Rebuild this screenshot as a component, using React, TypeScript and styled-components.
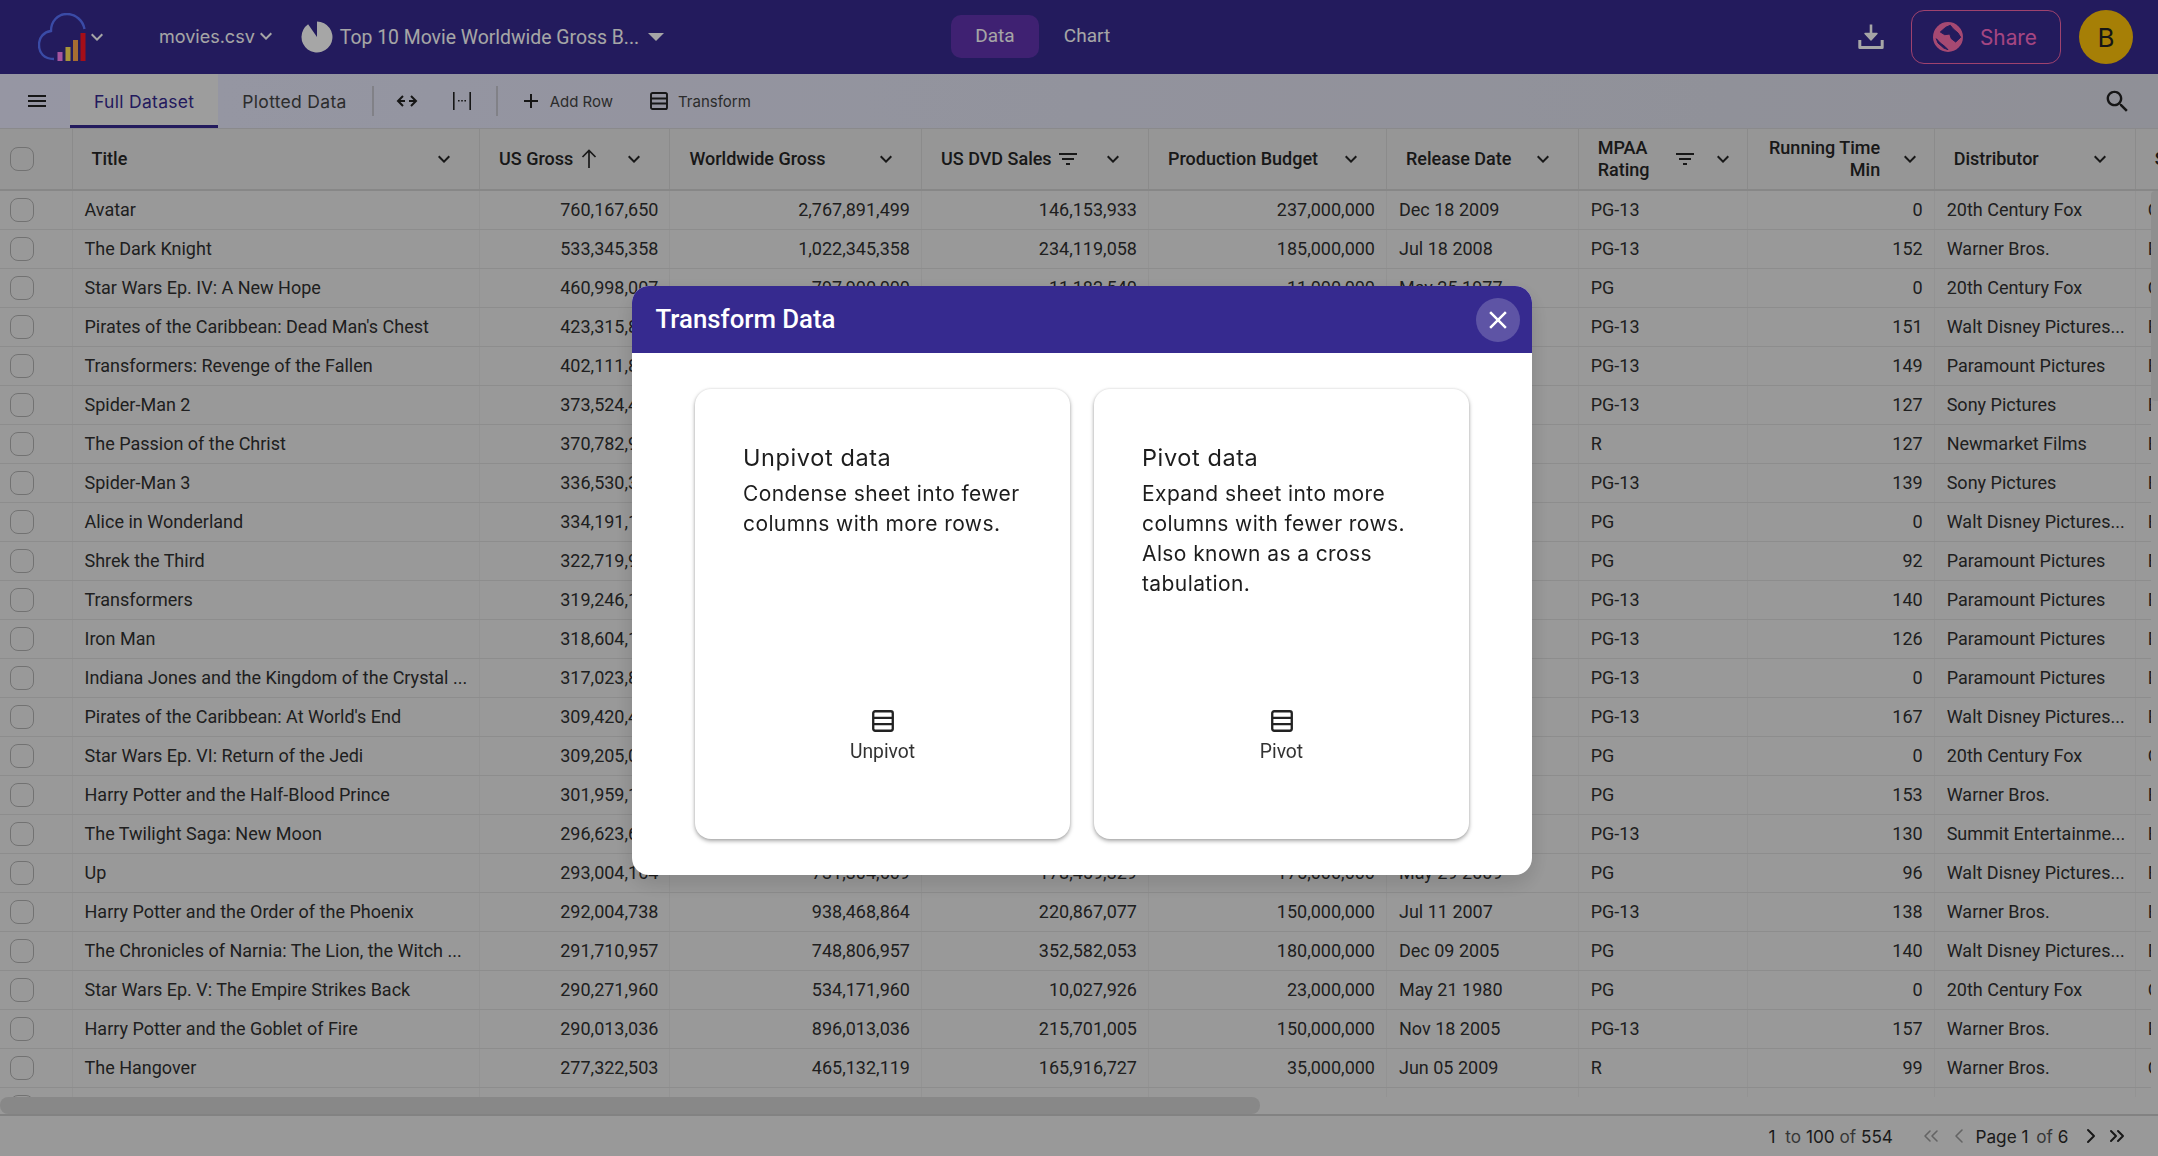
import React from 'react';
import styled, { createGlobalStyle } from 'styled-components';
import { ChevronLeft, ChevronRight, ChevronsLeft, ChevronsRight } from 'lucide-react';

const COLUMNS = '72.5px 407.5px 190.4px 251.6px 227px 238px 191.7px 169.5px 186.5px 201px 260px';
const PRIMARY = '#362a8f';

const GlobalStyle = createGlobalStyle`
    html,
    body {
        margin: 0;
        height: 100%;
        overflow: hidden;
        background: #ececec;
        font-family: Roboto, 'Liberation Sans', sans-serif;
    }
`;

const Page = styled.div`
    display: flex;
    flex-direction: column;
    height: 100vh;
`;

/* top bar */
const TopBar = styled.header`
    display: flex;
    align-items: center;
    flex: 0 0 74px;
    padding: 0 25px 0 38px;
    box-sizing: border-box;
    background: ${PRIMARY};
    color: #fff;
`;
const LeftGroup = styled.div`
    display: flex;
    align-items: center;
    width: 913px;
`;
const LogoChevron = styled.svg`
    width: 24px;
    height: 24px;
    margin-left: -1px;
    fill: #fff;
`;
const FileName = styled.div`
    display: flex;
    align-items: center;
    margin: -2px 0 0 50px;
    font: 400 18px Inter, sans-serif;
`;
const ChartPie = styled.svg`
    width: 32px;
    height: 32px;
    margin-left: 23px;
    fill: #fff;
`;
const ChartName = styled.div`
    margin-left: 7px;
    font: 400 19.4px Roboto, sans-serif;
`;
const Caret = styled.div`
    width: 0;
    height: 0;
    margin-left: 9px;
    border-left: 8px solid transparent;
    border-right: 8px solid transparent;
    border-top: 8px solid #fff;
`;
const ViewTab = styled.div<{ $active?: boolean }>`
    display: flex;
    align-items: center;
    justify-content: center;
    box-sizing: border-box;
    width: 88px;
    height: 43px;
    margin: -1px 0 0 ${({ $active }) => ($active ? 0 : 4)}px;
    padding-bottom: 2px;
    border-radius: 10px;
    background: ${({ $active }) => ($active ? '#6134af' : 'transparent')};
    font: 400 19px Roboto, sans-serif;
`;
const RightGroup = styled.div`
    display: flex;
    align-items: center;
    margin-left: auto;
`;
const ShareButton = styled.div`
    display: flex;
    align-items: center;
    gap: 17px;
    box-sizing: border-box;
    width: 150px;
    height: 54px;
    margin-left: 26px;
    padding-left: 21px;
    border: 1.5px solid #f566a9;
    border-radius: 13px;
    color: #fe6cc8;
    font: 400 20.8px Inter, sans-serif;
`;
const Avatar = styled.div`
    display: flex;
    align-items: center;
    justify-content: center;
    width: 54px;
    height: 54px;
    margin-left: 18px;
    border-radius: 50%;
    background: #ffc30a;
    color: #222;
    font: 400 26px Inter, sans-serif;
`;

/* toolbar */
const ToolBar = styled.div`
    display: flex;
    align-items: center;
    flex: 0 0 55px;
    box-sizing: border-box;
    border-bottom: 1px solid #d4d4d8;
    background: linear-gradient(90deg, #e6e7fb, #dcdde8);
    color: #333;
`;
const MenuButton = styled.div`
    display: flex;
    justify-content: center;
    box-sizing: border-box;
    width: 70px;
    padding-left: 4px;
`;
const Tab = styled.div<{ $active?: boolean }>`
    display: flex;
    align-items: center;
    box-sizing: border-box;
    height: 54px;
    padding: 3px 24px 0;
    border-bottom: 3px solid ${({ $active }) => ($active ? PRIMARY : 'transparent')};
    background: ${({ $active }) => ($active ? '#f2f2f2' : 'transparent')};
    color: ${({ $active }) => ($active ? PRIMARY : '#444')};
    font: 400 17.5px Inter, sans-serif;
    letter-spacing: 0.3px;
`;
const Divider = styled.div`
    width: 2px;
    height: 30px;
    margin-left: 1px;
    background: #c6c6cf;
`;
const ToolIcons = styled.div`
    display: flex;
    padding: 0 5px 0 6px;
`;
const ToolIcon = styled.div`
    display: flex;
    align-items: center;
    justify-content: center;
    width: 55px;
`;
const ToolAction = styled.div<{ $gap: number; $left: number }>`
    display: flex;
    align-items: center;
    gap: ${({ $gap }) => $gap}px;
    margin-left: ${({ $left }) => $left}px;
    font: 400 15px Inter, sans-serif;
    color: #444;
`;
const SearchButton = styled.div`
    display: flex;
    margin-left: auto;
    margin-right: 26px;
`;

/* grid */
const HeaderRow = styled.div`
    display: grid;
    grid-template-columns: ${COLUMNS};
    flex: 0 0 62px;
    box-sizing: border-box;
    overflow: hidden;
    border-bottom: 2px solid #cfcfcf;
    background: #e6e6e6;
`;
const HeaderCell = styled.div<{ $tight?: boolean }>`
    display: flex;
    align-items: center;
    box-sizing: border-box;
    min-width: 0;
    padding: 0 ${({ $tight }) => ($tight ? 12 : 23)}px 0 19px;
    border-right: 1px solid #d6d6d6;
    color: #262626;
    font: 500 18px/22px Roboto, sans-serif;
    white-space: nowrap;
`;
const HeaderCheck = styled(HeaderCell)`
    padding: 0 0 0 10px;
`;
const WrappedLabel = styled.div<{ $width: number; $right?: boolean }>`
    width: ${({ $width }) => $width}px;
    margin-left: ${({ $right }) => ($right ? 1 : 0)}px;
    text-align: ${({ $right }) => ($right ? 'right' : 'left')};
    white-space: normal;
`;
const HeaderIcon = styled.svg<{ $left: number }>`
    flex: none;
    width: 24px;
    height: 24px;
    margin-left: ${({ $left }) => $left}px;
    fill: #262626;
`;
const ColumnChevron = styled.svg`
    flex: none;
    width: 24px;
    height: 24px;
    margin-left: auto;
    fill: #262626;
`;
const Body = styled.div`
    display: flex;
    flex: 1;
    min-height: 0;
`;
const Viewport = styled.div`
    flex: 1;
    overflow: hidden;
`;
const Row = styled.div`
    display: grid;
    grid-template-columns: ${COLUMNS};
    box-sizing: border-box;
    height: 39px;
    border-bottom: 1px solid #d9d9d9;
`;
const Cell = styled.div<{ $right?: boolean }>`
    box-sizing: border-box;
    overflow: hidden;
    padding: 0 11px 0 12px;
    border-right: 1px solid #e2e2e2;
    color: #303030;
    font: 400 18px/38px Roboto, sans-serif;
    text-align: ${({ $right }) => ($right ? 'right' : 'left')};
    white-space: nowrap;
`;
const CheckCell = styled.div`
    padding: 7px 0 0 10px;
    border-right: 1px solid #e2e2e2;
`;
const Checkbox = styled.div`
    box-sizing: border-box;
    width: 24px;
    height: 24px;
    border: 1px solid #b0b0b0;
    border-radius: 8px;
`;
const VerticalTrack = styled.div`
    flex: 0 0 7px;
`;
const VerticalThumb = styled.div`
    height: 210px;
    border-radius: 4px 0 0 4px;
    background: #dcdcdc;
`;
const HorizontalTrack = styled.div`
    flex: 0 0 17px;
`;
const HorizontalThumb = styled.div`
    width: 1260px;
    height: 100%;
    border-radius: 8px;
    background: #d2d2d2;
`;

/* footer */
const Footer = styled.footer`
    display: flex;
    align-items: center;
    justify-content: flex-end;
    flex: 0 0 42px;
    box-sizing: border-box;
    padding: 0 28.5px 0 0;
    border-top: 2px solid #c8c8c8;
    color: #555;
    font: 400 17.2px Inter, sans-serif;
`;
const Strong = styled.span<{ $gap?: number }>`
    margin-right: ${({ $gap }) => $gap ?? 0}px;
    color: #2a2a2a;
`;
const Summary = styled.div`
    margin-right: 24.5px;
`;
const PageLabel = styled.div`
    margin: 0 9px 0 2px;
`;
const PagerIcon = styled.span<{ $disabled?: boolean }>`
    display: flex;
    margin: 0 ${({ $disabled }) => ($disabled ? 2 : 1)}px;
    color: ${({ $disabled }) => ($disabled ? '#9a9a9a' : '#262626')};
`;

/* modal */
const Scrim = styled.div`
    position: fixed;
    inset: 0;
    display: flex;
    align-items: center;
    justify-content: center;
    padding: 5px 0 0 6px;
    background: rgba(0, 0, 0, 0.35);
`;
const Modal = styled.div`
    width: 900px;
    height: 589px;
    overflow: hidden;
    border-radius: 17px;
    background: #fff;
    box-shadow: 0 8px 24px rgba(0, 0, 0, 0.15);
`;
const ModalHeader = styled.div`
    display: flex;
    align-items: center;
    justify-content: space-between;
    box-sizing: border-box;
    height: 67px;
    padding: 0 12px 0 23.5px;
    background: ${PRIMARY};
    color: #fff;
    font: 500 25.8px Roboto, sans-serif;
`;
const ModalTitle = styled.div`
    margin-top: -2px;
`;
const CloseButton = styled.div`
    display: flex;
    align-items: center;
    justify-content: center;
    width: 44px;
    height: 44px;
    border-radius: 50%;
    background: rgba(255, 255, 255, 0.2);
`;
const ModalBody = styled.div`
    display: flex;
    gap: 24px;
    padding: 36px 63px;
`;
const Card = styled.div`
    display: flex;
    flex-direction: column;
    box-sizing: border-box;
    width: 375px;
    height: 450px;
    padding: 54px 48px 0;
    border-radius: 16px;
    background: #fff;
    box-shadow: 0 2px 4px rgba(0, 0, 0, 0.35), 0 0 3px rgba(0, 0, 0, 0.1);
    color: #1d1d1d;
`;
const CardTitle = styled.div`
    margin-bottom: 6px;
    font: 400 23.5px/30px Inter, sans-serif;
    letter-spacing: 0.6px;
`;
const CardText = styled.div`
    font: 400 21px/30px Inter, sans-serif;
    letter-spacing: 0.4px;
`;
const CardAction = styled.div`
    display: flex;
    flex-direction: column;
    align-items: center;
    gap: 9px;
    margin-top: auto;
    padding-bottom: 76px;
    font: 400 19.3px/22px Roboto, sans-serif;
    color: #333;
`;

const Chevron = () => (
    <path d="M7.41 8.59 12 13.17l4.59-4.58L18 10l-6 6-6-6 1.41-1.41z" />
);
const FilterPath = () => <path d="M10 18h4v-2h-4v2zM3 6v2h18V6H3zm3 7h12v-2H6v2z" />;
const SortPath = () => (
    <path d="M12 21V3.5M5.5 10 12 3.5 18.5 10" fill="none" stroke="#262626" strokeWidth="1.7" />
);

const TableIcon = ({ size }: { size: number }) => (
    <svg width={size} height={size} viewBox="0 0 18 18" fill="none" stroke="#222" strokeWidth="1.9">
        <rect x="1" y="1" width="16" height="16" rx="1.6" />
        <path d="M1 6.5h16M1 11.5h16" />
    </svg>
);

const GlobeIcon = () => (
    <svg width="30" height="30" viewBox="0 0 30 30">
        <circle cx="15" cy="15" r="15" fill="#ff70b0" />
        <path
            d="M7.3 10 12.7 5.3 17.3 3.3 20 6.7 25 11 27.7 15.3 22.7 20 18.3 16.7 16.7 12 11.7 12.7Z"
            fill={PRIMARY}
            stroke={PRIMARY}
            strokeLinejoin="round"
        />
        <path
            d="M3.3 16.7 7.3 21 11.7 24.3 15 27.7 10.7 26 5 21Z"
            fill={PRIMARY}
            stroke={PRIMARY}
            strokeLinejoin="round"
        />
    </svg>
);

type RowData = [string, string, string, string, string, string, string, string, string, string];

const ROWS: RowData[] = [
    ['Avatar', '760,167,650', '2,767,891,499', '146,153,933', '237,000,000', 'Dec 18 2009', 'PG-13', '0', '20th Century Fox', 'Original Screenplay'],
    ['The Dark Knight', '533,345,358', '1,022,345,358', '234,119,058', '185,000,000', 'Jul 18 2008', 'PG-13', '152', 'Warner Bros.', 'Based on Comic'],
    ['Star Wars Ep. IV: A New Hope', '460,998,007', '797,900,000', '11,182,540', '11,000,000', 'May 25 1977', 'PG', '0', '20th Century Fox', 'Original Screenplay'],
    ["Pirates of the Caribbean: Dead Man's Chest", '423,315,812', '1,065,659,812', '320,830,925', '225,000,000', 'Jul 07 2006', 'PG-13', '151', 'Walt Disney Pictures...', 'Based on Game'],
    ['Transformers: Revenge of the Fallen', '402,111,870', '836,519,699', '288,000,000', '210,000,000', 'Jun 24 2009', 'PG-13', '149', 'Paramount Pictures', 'Based on Toy'],
    ['Spider-Man 2', '373,524,485', '783,705,001', '4,196,484', '200,000,000', 'Jun 30 2004', 'PG-13', '127', 'Sony Pictures', 'Based on Comic'],
    ['The Passion of the Christ', '370,782,930', '611,899,420', '618,454', '25,000,000', 'Feb 25 2004', 'R', '127', 'Newmarket Films', 'Based on Book'],
    ['Spider-Man 3', '336,530,303', '890,875,303', '124,058,348', '258,000,000', 'May 04 2007', 'PG-13', '139', 'Sony Pictures', 'Based on Comic'],
    ['Alice in Wonderland', '334,191,110', '1,023,291,110', '152,000,000', '200,000,000', 'Mar 05 2010', 'PG', '0', 'Walt Disney Pictures...', 'Based on Book'],
    ['Shrek the Third', '322,719,944', '798,958,162', '176,400,340', '160,000,000', 'May 18 2007', 'PG', '92', 'Paramount Pictures', 'Based on Book'],
    ['Transformers', '319,246,193', '708,272,592', '290,787,166', '151,000,000', 'Jul 03 2007', 'PG-13', '140', 'Paramount Pictures', 'Based on Toy'],
    ['Iron Man', '318,604,126', '582,604,126', '169,251,757', '186,000,000', 'May 02 2008', 'PG-13', '126', 'Paramount Pictures', 'Based on Comic'],
    ['Indiana Jones and the Kingdom of the Crystal ...', '317,023,851', '786,558,254', '100,000,000', '185,000,000', 'May 22 2008', 'PG-13', '0', 'Paramount Pictures', 'Based on Story'],
    ["Pirates of the Caribbean: At World's End", '309,420,425', '960,996,492', '296,000,000', '300,000,000', 'May 25 2007', 'PG-13', '167', 'Walt Disney Pictures...', 'Based on Game'],
    ['Star Wars Ep. VI: Return of the Jedi', '309,205,079', '572,700,000', '12,356,425', '32,500,000', 'May 25 1983', 'PG', '0', '20th Century Fox', 'Original Screenplay'],
    ['Harry Potter and the Half-Blood Prince', '301,959,197', '937,499,905', '215,000,000', '250,000,000', 'Jul 15 2009', 'PG', '153', 'Warner Bros.', 'Based on Book'],
    ['The Twilight Saga: New Moon', '296,623,634', '709,711,008', '162,000,000', '50,000,000', 'Nov 20 2009', 'PG-13', '130', 'Summit Entertainme...', 'Based on Book'],
    ['Up', '293,004,164', '731,304,609', '178,459,329', '175,000,000', 'May 29 2009', 'PG', '96', 'Walt Disney Pictures...', 'Based on Story'],
    ['Harry Potter and the Order of the Phoenix', '292,004,738', '938,468,864', '220,867,077', '150,000,000', 'Jul 11 2007', 'PG-13', '138', 'Warner Bros.', 'Based on Book'],
    ['The Chronicles of Narnia: The Lion, the Witch ...', '291,710,957', '748,806,957', '352,582,053', '180,000,000', 'Dec 09 2005', 'PG', '140', 'Walt Disney Pictures...', 'Based on Book'],
    ['Star Wars Ep. V: The Empire Strikes Back', '290,271,960', '534,171,960', '10,027,926', '23,000,000', 'May 21 1980', 'PG', '0', '20th Century Fox', 'Original Screenplay'],
    ['Harry Potter and the Goblet of Fire', '290,013,036', '896,013,036', '215,701,005', '150,000,000', 'Nov 18 2005', 'PG-13', '157', 'Warner Bros.', 'Based on Book'],
    ['The Hangover', '277,322,503', '465,132,119', '165,916,727', '35,000,000', 'Jun 05 2009', 'R', '99', 'Warner Bros.', 'Original Screenplay'],
];

const RIGHT_ALIGNED = [1, 2, 3, 4, 7];

const SimpleHeaders = ({ label, extra }: { label: string; extra?: React.ReactNode }) => (
    <HeaderCell>
        {label}
        {extra}
        <ColumnChevron viewBox="0 0 24 24">
            <Chevron />
        </ColumnChevron>
    </HeaderCell>
);

export default function App() {
    return (
        <Page>
            <GlobalStyle />
            <TopBar>
                <LeftGroup>
                    <svg width="48" height="48" viewBox="0 0 48 48" fill="none">
                        <path
                            d="M16 46C6 46 1 40 1 32C1 24 6 19 13 18C13 8 20 1 29 1C38 1 45 8 46.5 16"
                            stroke="#5a73ff"
                            strokeWidth="2.4"
                        />
                        <rect x="19.5" y="39" width="5" height="9" fill="#ff82f5" />
                        <rect x="27.5" y="34" width="5" height="14" fill="#ffe45a" />
                        <rect x="35" y="27" width="5" height="21" fill="#ffa84d" />
                        <rect x="42.5" y="20" width="5" height="28" fill="#ff1626" />
                    </svg>
                    <LogoChevron viewBox="0 0 24 24">
                        <Chevron />
                    </LogoChevron>
                    <FileName>
                        movies.csv
                        <LogoChevron viewBox="0 0 24 24">
                            <Chevron />
                        </LogoChevron>
                    </FileName>
                    <ChartPie viewBox="0 0 32 32">
                        <path d="M16 16L16 .5A15.5 15.5 0 1 1 7.1 3.3Z" />
                    </ChartPie>
                    <ChartName>Top 10 Movie Worldwide Gross B...</ChartName>
                    <Caret />
                </LeftGroup>
                <ViewTab $active>Data</ViewTab>
                <ViewTab>Chart</ViewTab>
                <RightGroup>
                    <svg width="28" height="28" viewBox="0 0 28 28" fill="none" stroke="#fff">
                        <path d="M14 1.5V15" strokeWidth="2.6" />
                        <path d="M8 10.5h12L14 17z" fill="#fff" strokeWidth="1.4" strokeLinejoin="round" />
                        <path d="M2.8 17v7.4h22.4V17" strokeWidth="3" strokeLinejoin="round" />
                    </svg>
                    <ShareButton>
                        <GlobeIcon />
                        Share
                    </ShareButton>
                    <Avatar>B</Avatar>
                </RightGroup>
            </TopBar>
            <ToolBar>
                <MenuButton>
                    <svg width="24" height="24" viewBox="0 0 24 24" fill="#222">
                        <path d="M3 18h18v-2H3v2zm0-5h18v-2H3v2zm0-7v2h18V6H3z" />
                    </svg>
                </MenuButton>
                <Tab $active>Full Dataset</Tab>
                <Tab>Plotted Data</Tab>
                <Divider />
                <ToolIcons>
                    <ToolIcon>
                        <svg width="22" height="14" viewBox="0 0 22 14" fill="none" stroke="#222" strokeWidth="2">
                            <path d="M7 2 2 7l5 5M2 7h7M15 2l5 5-5 5M20 7h-7" />
                        </svg>
                    </ToolIcon>
                    <ToolIcon>
                        <svg width="20" height="20" viewBox="0 0 20 20" fill="#222">
                            <path d="M1 1h1.6v18H1zM17.4 1H19v18h-1.6z" />
                            <path d="M6 9h1.6v1.6H6zM9.2 9h1.6v1.6H9.2zM12.4 9H14v1.6h-1.6z" />
                        </svg>
                    </ToolIcon>
                </ToolIcons>
                <Divider />
                <ToolAction $gap={7} $left={21}>
                    <svg width="24" height="24" viewBox="0 0 24 24" fill="#222">
                        <path d="M19 13h-6v6h-2v-6H5v-2h6V5h2v6h6v2z" />
                    </svg>
                    Add Row
                </ToolAction>
                <ToolAction $gap={10} $left={37}>
                    <TableIcon size={18} />
                    Transform
                </ToolAction>
                <SearchButton>
                    <svg width="29" height="29" viewBox="0 0 24 24" fill="#222">
                        <path d="M15.5 14h-.79l-.28-.27C15.41 12.59 16 11.11 16 9.5 16 5.91 13.09 3 9.5 3S3 5.91 3 9.5 5.91 16 9.5 16c1.61 0 3.09-.59 4.23-1.57l.27.28v.79l5 4.99L20.49 19l-4.99-5zm-6 0C7.01 14 5 11.99 5 9.5S7.01 5 9.5 5 14 7.01 14 9.5 11.99 14 9.5 14z" />
                    </svg>
                </SearchButton>
            </ToolBar>
            <HeaderRow>
                <HeaderCheck>
                    <Checkbox />
                </HeaderCheck>
                <SimpleHeaders label="Title" />
                <SimpleHeaders
                    label="US Gross"
                    extra={
                        <HeaderIcon $left={4} viewBox="0 0 24 24">
                            <SortPath />
                        </HeaderIcon>
                    }
                />
                <SimpleHeaders label="Worldwide Gross" />
                <SimpleHeaders
                    label="US DVD Sales"
                    extra={
                        <HeaderIcon $left={4} viewBox="0 0 24 24">
                            <FilterPath />
                        </HeaderIcon>
                    }
                />
                <SimpleHeaders label="Production Budget" />
                <SimpleHeaders label="Release Date" />
                <HeaderCell $tight>
                    <WrappedLabel $width={54}>MPAA Rating</WrappedLabel>
                    <HeaderIcon $left={21} viewBox="0 0 24 24">
                        <FilterPath />
                    </HeaderIcon>
                    <ColumnChevron viewBox="0 0 24 24">
                        <Chevron />
                    </ColumnChevron>
                </HeaderCell>
                <HeaderCell $tight>
                    <WrappedLabel $width={112} $right>
                        Running Time Min
                    </WrappedLabel>
                    <ColumnChevron viewBox="0 0 24 24">
                        <Chevron />
                    </ColumnChevron>
                </HeaderCell>
                <SimpleHeaders label="Distributor" />
                <SimpleHeaders label="Source" />
            </HeaderRow>
            <Body>
                <Viewport>
                    {ROWS.map((row) => (
                        <Row key={row[0]}>
                            <CheckCell>
                                <Checkbox />
                            </CheckCell>
                            {row.map((value, index) => (
                                <Cell key={index} $right={RIGHT_ALIGNED.includes(index)}>
                                    {value}
                                </Cell>
                            ))}
                        </Row>
                    ))}
                    <Row>
                        <CheckCell>
                            <Checkbox />
                        </CheckCell>
                        <Cell />
                        <Cell />
                        <Cell />
                        <Cell />
                        <Cell />
                        <Cell />
                        <Cell />
                        <Cell />
                        <Cell />
                        <Cell />
                    </Row>
                </Viewport>
                <VerticalTrack>
                    <VerticalThumb />
                </VerticalTrack>
            </Body>
            <HorizontalTrack>
                <HorizontalThumb />
            </HorizontalTrack>
            <Footer>
                <Summary>
                    <Strong $gap={5}>1</Strong> to <Strong>100</Strong> of <Strong>554</Strong>
                </Summary>
                <PagerIcon $disabled>
                    <ChevronsLeft size={24} strokeWidth={1.6} />
                </PagerIcon>
                <PagerIcon $disabled>
                    <ChevronLeft size={24} strokeWidth={1.6} />
                </PagerIcon>
                <PageLabel>
                    <Strong $gap={3}>Page 1</Strong> of <Strong>6</Strong>
                </PageLabel>
                <PagerIcon>
                    <ChevronRight size={24} strokeWidth={2} />
                </PagerIcon>
                <PagerIcon>
                    <ChevronsRight size={24} strokeWidth={2} />
                </PagerIcon>
            </Footer>
            <Scrim>
                <Modal>
                    <ModalHeader>
                        <ModalTitle>Transform Data</ModalTitle>
                        <CloseButton>
                            <svg width="30" height="30" viewBox="0 0 24 24" fill="#fff">
                                <path d="M19 6.41 17.59 5 12 10.59 6.41 5 5 6.41 10.59 12 5 17.59 6.41 19 12 13.41 17.59 19 19 17.59 13.41 12z" />
                            </svg>
                        </CloseButton>
                    </ModalHeader>
                    <ModalBody>
                        <Card>
                            <CardTitle>Unpivot data</CardTitle>
                            <CardText>Condense sheet into fewer columns with more rows.</CardText>
                            <CardAction>
                                <TableIcon size={22} />
                                Unpivot
                            </CardAction>
                        </Card>
                        <Card>
                            <CardTitle>Pivot data</CardTitle>
                            <CardText>
                                Expand sheet into more columns with fewer rows. Also known as a cross
                                tabulation.
                            </CardText>
                            <CardAction>
                                <TableIcon size={22} />
                                Pivot
                            </CardAction>
                        </Card>
                    </ModalBody>
                </Modal>
            </Scrim>
        </Page>
    );
}
